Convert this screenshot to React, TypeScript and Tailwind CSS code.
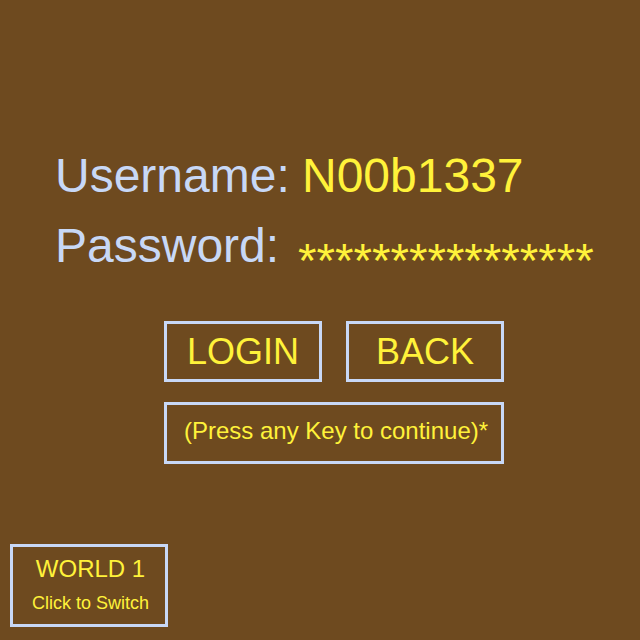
const font = { fontFamily: '"Liberation Sans", Arial, sans-serif' }

export default function App() {
  return (
    <div className="relative flex h-[640px] w-[640px] flex-col bg-[#6e4a1f]" style={font}>
      <div className="mt-[141px] ml-[55px] grid grid-cols-[247px_auto] text-[48px] leading-[70px]">
        <div className="text-[#c8d8f6]">Username:</div>
        <div className="text-[#fff23a]">N00b1337</div>
        <div className="text-[#c8d8f6]">Password:</div>
        <div className="-ml-[4px] translate-y-[15px] text-[47.5px] text-[#fff23a]">****************</div>
      </div>

      <div className="mt-[40px] ml-[164px] flex w-[340px] flex-col gap-5">
        <div className="flex gap-6">
          <button className="flex h-[61px] w-[158px] items-center justify-center border-[3px] border-[#c8d8f6] text-[36px] text-[#fff23a]">
            LOGIN
          </button>
          <button className="flex h-[61px] w-[158px] items-center justify-center border-[3px] border-[#c8d8f6] text-[36px] text-[#fff23a]">
            BACK
          </button>
        </div>
        <button className="flex h-[62px] w-[340px] items-center justify-center border-[3px] border-[#c8d8f6] pb-[4px] pl-[4px] text-[24px] text-[#fff23a]">
          (Press any Key to continue)*
        </button>
      </div>

      <button className="mt-auto mb-[13px] ml-[10px] flex h-[83px] w-[158px] flex-col items-center justify-center border-[3px] border-[#c8d8f6] pl-[3px] text-[#fff23a]">
        <span className="text-[24px] leading-[35px]">WORLD 1</span>
        <span className="text-[18px] leading-[35px]">Click to Switch</span>
      </button>
    </div>
  )
}
